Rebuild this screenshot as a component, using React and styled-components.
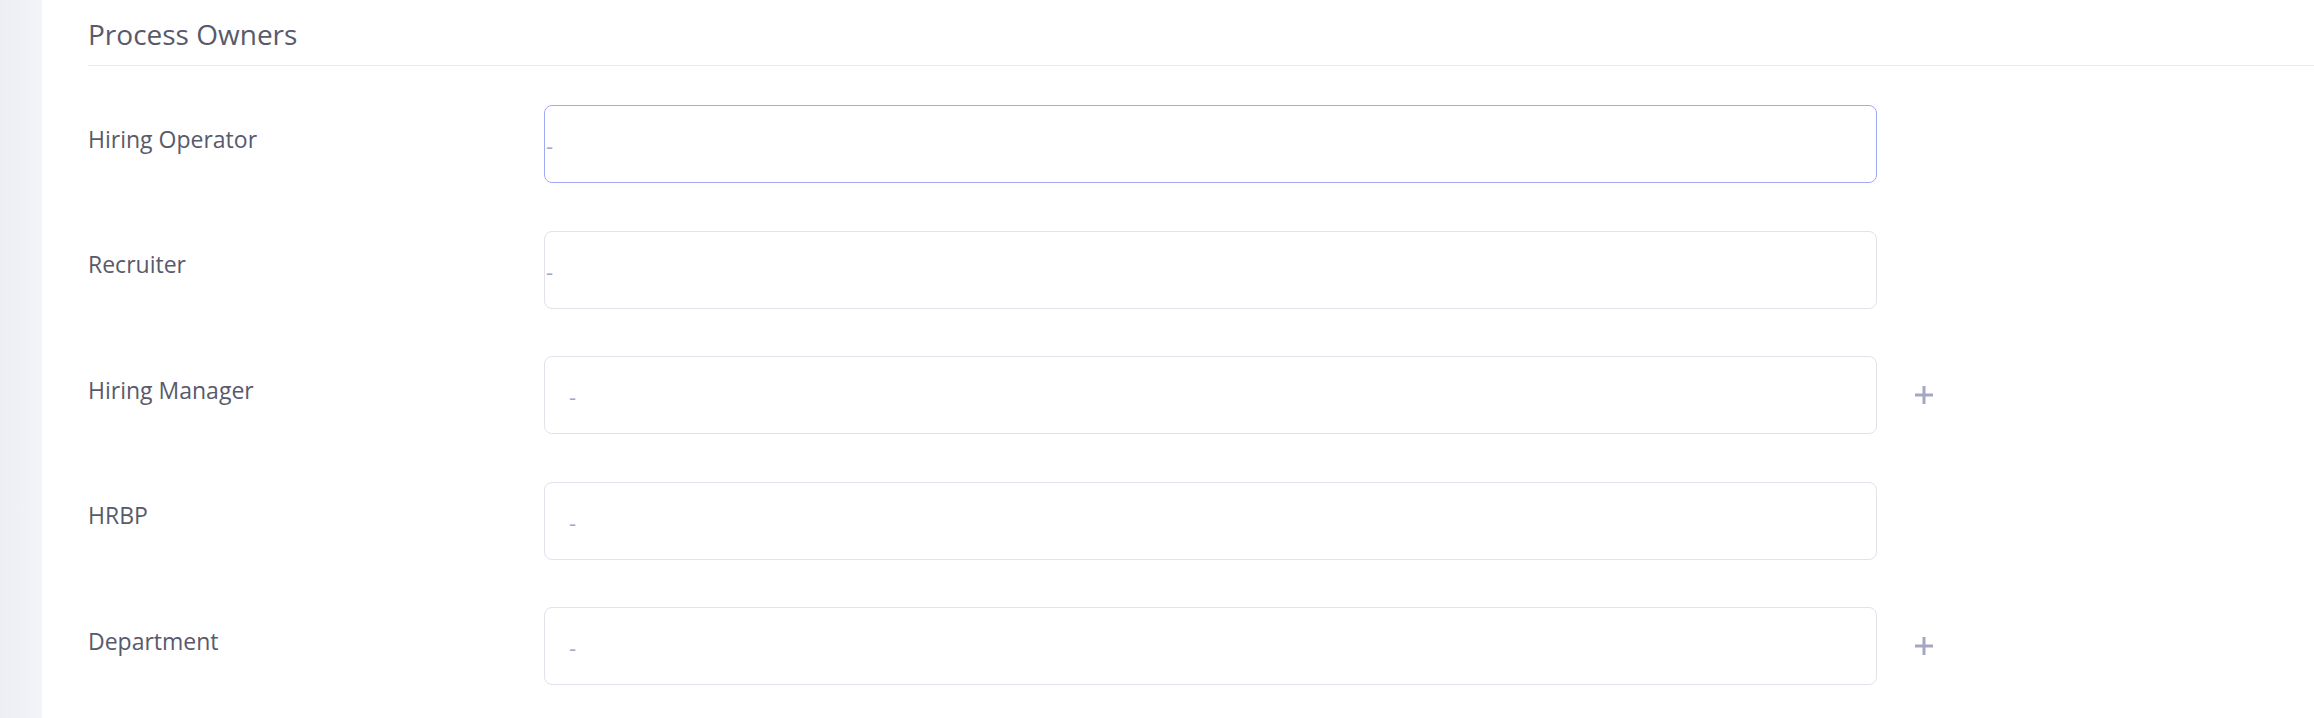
import React from 'react'
import styled, { createGlobalStyle } from 'styled-components'

const GlobalStyle = createGlobalStyle`
    html, body {
        margin: 0;
        padding: 0;
        background: #ffffff;
        font-family: "Open Sans", "Noto Sans", sans-serif;
    }
`

const owners = [
    { label: 'Hiring Operator', focused: true, bare: true },
    { label: 'Recruiter', bare: true },
    { label: 'Hiring Manager', addable: true },
    { label: 'HRBP' },
    { label: 'Department', addable: true },
]

const PlusIcon = () => (
    <svg width="20" height="20" viewBox="0 0 20 20" fill="none">
        <path d="M10 1v18M1 10h18" stroke="#a4a7c2" strokeWidth="3" />
    </svg>
)

const App = () => {
    return (
        <Page>
            <GlobalStyle />
            <Sidebar />
            <Content>
                <Title>Process Owners</Title>
                <Fields>
                    {owners.map(o => (
                        <Row key={o.label}>
                            <Label>{o.label}</Label>
                            <Field $focused={o.focused} $bare={o.bare}>-</Field>
                            {o.addable && <AddButton aria-label="add"><PlusIcon /></AddButton>}
                        </Row>
                    ))}
                </Fields>
            </Content>
        </Page>
    )
}

export default App


// ================================= styling =================================

const Page = styled.div`
    display: flex;
    width: 2314px;
    height: 718px;
    overflow: hidden;
`

// grey strip on the far left
const Sidebar = styled.div`
    width: 42px;
    flex-shrink: 0;
    background: linear-gradient(to right, #eceef4, #f3f4f8);
`

const Content = styled.div`
    flex: 1;
    padding-left: 46px;
`

const Title = styled.h2`
    margin: 0;
    padding-top: 15px;
    height: 66px;
    box-sizing: border-box;
    font-size: 28px;
    font-weight: 400;
    line-height: 38px;
    color: #585a6c;
    border-bottom: 1px solid #e8e8ee;
`

const Fields = styled.div`
    display: flex;
    flex-direction: column;
    gap: 47.6px;
    padding-top: 39px;
`

const Row = styled.div`
    display: flex;
    align-items: center;
`

const Label = styled.div`
    width: 456px;
    flex-shrink: 0;
    font-size: 23px;
    color: #585a6c;
    margin-bottom: 11px;
`

const Field = styled.div`
    width: 1333px;
    height: 78px;
    box-sizing: border-box;
    display: flex;
    align-items: center;
    padding: 2px ${p => (p.$bare ? '1px' : '24px')} 0;
    border: 1px solid ${p => (p.$focused ? '#a0a9f4' : '#e2e2ea')};
    border-radius: 8px;
    font-size: 22px;
    color: #a4a7c8;
`

const AddButton = styled.button`
    margin-left: 37px;
    padding: 0;
    border: none;
    background: none;
    display: flex;
    cursor: pointer;
`
